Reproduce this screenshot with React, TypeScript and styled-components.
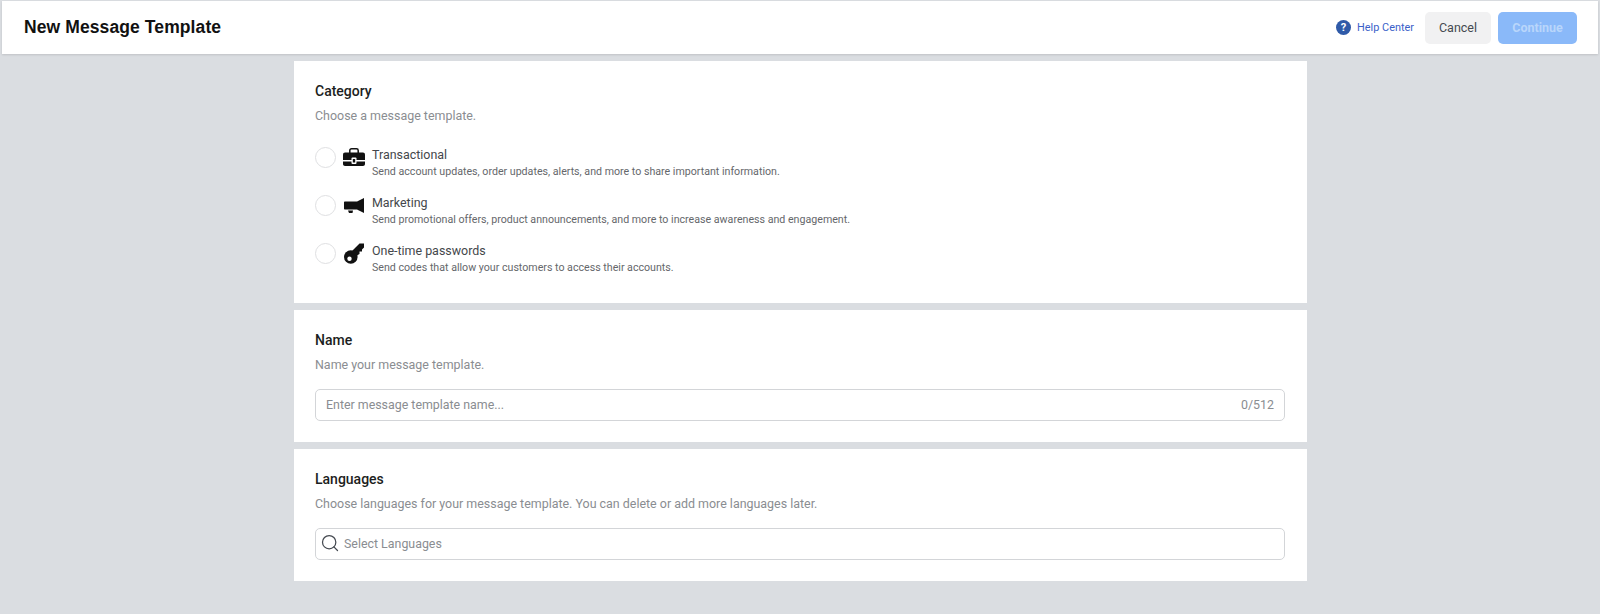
import styled, { createGlobalStyle } from 'styled-components';
import { Search } from 'lucide-react';

const GlobalStyle = createGlobalStyle`
  html, body {
    margin: 0;
    padding: 0;
    height: 100%;
    background: #dadde1;
    font-family: Roboto, "Liberation Sans", sans-serif;
  }
`;

const Page = styled.div`
  width: 1600px;
  height: 614px;
  overflow: hidden;
  box-sizing: border-box;
  padding: 1px 2px 0 2px;
  background: #dadde1;
`;

const Header = styled.header`
  display: flex;
  align-items: center;
  justify-content: space-between;
  height: 53px;
  padding: 0 21px 0 22px;
  background: #fff;
  box-shadow: 0 1px 2px rgba(0, 0, 0, 0.12);
`;

const Title = styled.h1`
  margin: 0;
  font-family: "Liberation Sans", Arial, sans-serif;
  font-size: 17.5px;
  font-weight: 700;
  letter-spacing: 0.1px;
  color: #111;
`;

const Actions = styled.div`
  display: flex;
  align-items: center;
`;

const HelpLink = styled.a`
  display: flex;
  align-items: center;
  gap: 6px;
  margin-right: 11px;
  font-size: 10.9px;
  color: #3b5fc9;
`;

const HelpIcon = styled.span`
  display: flex;
  align-items: center;
  justify-content: center;
  width: 15px;
  height: 15px;
  border-radius: 50%;
  background: #2f5aa8;
  color: #fff;
  font-size: 11px;
  font-weight: 700;
`;

const Button = styled.button<{ $primary?: boolean }>`
  height: 32px;
  border: 0;
  border-radius: 5px;
  font-family: inherit;
  font-size: 12.5px;
  font-weight: ${p => (p.$primary ? 700 : 400)};
  color: ${p => (p.$primary ? '#b9d6fb' : '#444950')};
  background: ${p => (p.$primary ? '#8ab9f9' : '#f1f1f2')};
  width: ${p => (p.$primary ? '79px' : '66px')};
  margin-left: ${p => (p.$primary ? '7px' : '0')};
`;

const Main = styled.main`
  display: flex;
  flex-direction: column;
  gap: 7px;
  width: 1013px;
  margin: 7px 0 0 292px;
`;

const Panel = styled.section<{ $height: number }>`
  box-sizing: border-box;
  height: ${p => p.$height}px;
  padding: 21px 22px 0 21px;
  background: #fff;
`;

const PanelTitle = styled.h2`
  margin: 0;
  font-size: 14px;
  line-height: 18px;
  font-weight: 500;
  color: #1c1e21;
`;

const PanelHint = styled.p`
  margin: 7px 0 0;
  font-size: 12.45px;
  line-height: 18px;
  color: #8a8d91;
`;

const Options = styled.div`
  display: flex;
  flex-direction: column;
  gap: 15px;
  margin-top: 21px;
`;

const Option = styled.div`
  display: flex;
  align-items: flex-start;
`;

const Radio = styled.span`
  flex: none;
  box-sizing: border-box;
  width: 21px;
  height: 21px;
  margin-top: 1px;
  border: 1px solid #dfe0e2;
  border-radius: 50%;
`;

const OptionIcon = styled.svg`
  flex: none;
  width: 22px;
  height: 22px;
  margin: 0 7px 0 7px;
  fill: #111;
`;

const OptionText = styled.div`
  display: flex;
  flex-direction: column;
`;

const OptionTitle = styled.span`
  font-size: 12.45px;
  line-height: 18px;
  color: #44474b;
`;

const OptionHint = styled.span`
  font-size: 10.65px;
  line-height: 15px;
  color: #65676b;
`;

const Field = styled.div`
  display: flex;
  align-items: center;
  justify-content: space-between;
  box-sizing: border-box;
  height: 32px;
  margin-top: 15px;
  padding: 0 10px 2px;
  border: 1px solid #d3d5d8;
  border-radius: 5px;
  font-size: 12.4px;
  color: #8a8d91;
`;

const SearchGroup = styled.div`
  display: flex;
  align-items: center;
  gap: 4px;
  margin-left: -6px;
  svg {
    color: #444950;
  }
`;

const options = [
  {
    title: 'Transactional',
    hint: 'Send account updates, order updates, alerts, and more to share important information.',
    icon: (
      <>
        <path d="M6.800 7V4.500c0-1 .7-1.700 1.700-1.700h5c1 0 1.700.7 1.700 1.700V7" fill="none" stroke="#111" strokeWidth="1.500" />
        <path d="M2 6.500h18c1.100 0 2 .9 2 2V14H0V8.500c0-1.100.9-2 2-2Z" />
        <path d="M0 15.500h22V18c0 1.100-.9 2-2 2H2c-1.100 0-2-.9-2-2v-2.500Z" />
        <rect x="8.500" y="11.500" width="5" height="6.500" rx="1" fill="#fff" />
        <rect x="9.800" y="13" width="2.400" height="3.500" fill="#111" />
      </>
    ),
  },
  {
    title: 'Marketing',
    hint: 'Send promotional offers, product announcements, and more to increase awareness and engagement.',
    icon: (
      <path d="M21 4v15l-7-3.500H2c-.6 0-1-.4-1-1V8.500c0-.6.4-1 1-1h12L21 4ZM5 16.500h5l-.5 2.500H6L5 16.500Z" />
    ),
  },
  {
    title: 'One-time passwords',
    hint: 'Send codes that allow your customers to access their accounts.',
    icon: (
      <>
        <circle cx="7.800" cy="15" r="6.800" />
        <path d="M7.500 10.500 16.500 1.500H21V5.500L19 7.500V9.500H16.500V12L13 14Z" />
        <circle cx="6.500" cy="16.800" r="2.200" fill="#fff" />
      </>
    ),
  },
];

export default function App() {
  return (
    <Page>
      <GlobalStyle />
      <Header>
        <Title>New Message Template</Title>
        <Actions>
          <HelpLink>
            <HelpIcon>?</HelpIcon>
            Help Center
          </HelpLink>
          <Button>Cancel</Button>
          <Button $primary>Continue</Button>
        </Actions>
      </Header>
      <Main>
        <Panel $height={242}>
          <PanelTitle>Category</PanelTitle>
          <PanelHint>Choose a message template.</PanelHint>
          <Options>
            {options.map(option => (
              <Option key={option.title}>
                <Radio />
                <OptionIcon viewBox="0 0 22 22">{option.icon}</OptionIcon>
                <OptionText>
                  <OptionTitle>{option.title}</OptionTitle>
                  <OptionHint>{option.hint}</OptionHint>
                </OptionText>
              </Option>
            ))}
          </Options>
        </Panel>
        <Panel $height={132}>
          <PanelTitle>Name</PanelTitle>
          <PanelHint>Name your message template.</PanelHint>
          <Field>
            <span>Enter message template name...</span>
            <span>0/512</span>
          </Field>
        </Panel>
        <Panel $height={132}>
          <PanelTitle>Languages</PanelTitle>
          <PanelHint>Choose languages for your message template. You can delete or add more languages later.</PanelHint>
          <Field>
            <SearchGroup>
              <Search size={20} strokeWidth={1.5} />
              Select Languages
            </SearchGroup>
          </Field>
        </Panel>
      </Main>
    </Page>
  );
}
